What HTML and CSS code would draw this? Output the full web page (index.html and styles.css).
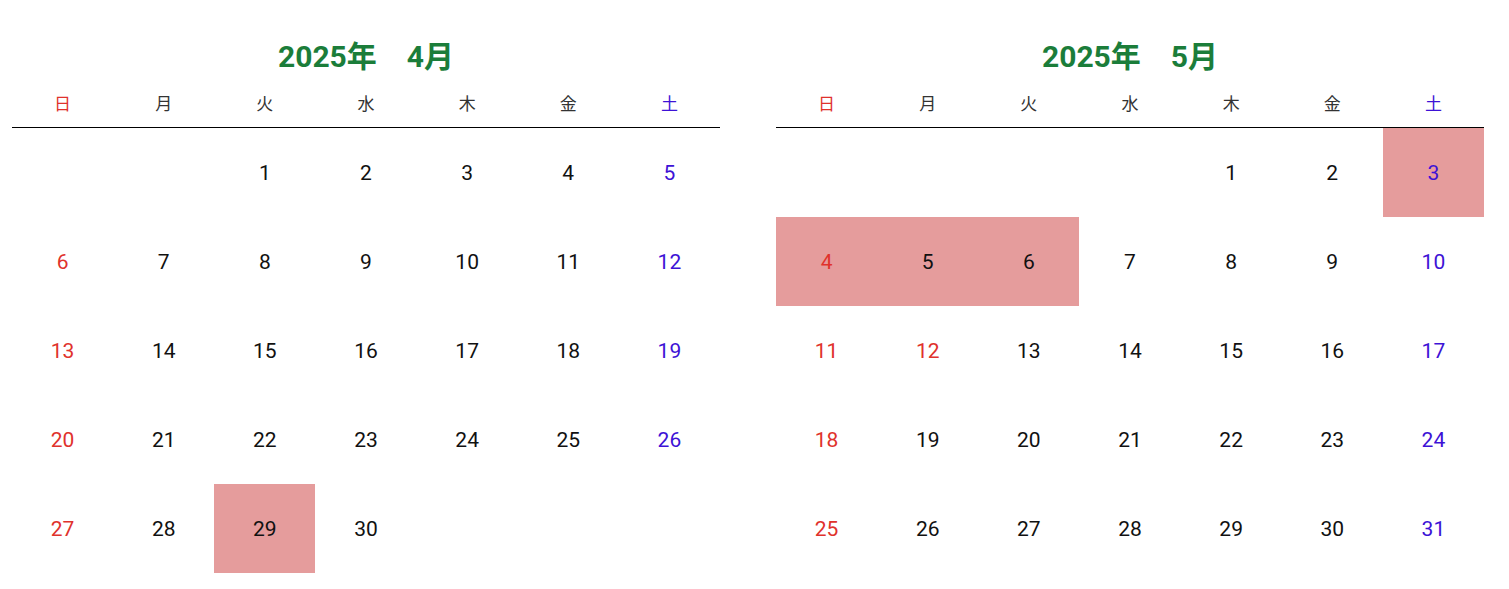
FILE: index.html
```html
<!DOCTYPE html>
<html lang="ja">
<head>
<meta charset="utf-8">
<link rel="stylesheet" href="styles.css">
</head>
<body>
<div class="page">
  <section class="cal">
    <h2 class="title">2025年　4月</h2>
    <div class="week">
      <div class="sun">日</div><div>月</div><div>火</div><div>水</div><div>木</div><div>金</div><div class="sat">土</div>
    </div>
    <div class="days">
      <div></div><div></div><div>1</div><div>2</div><div>3</div><div>4</div><div class="sat">5</div>
      <div class="sun">6</div><div>7</div><div>8</div><div>9</div><div>10</div><div>11</div><div class="sat">12</div>
      <div class="sun">13</div><div>14</div><div>15</div><div>16</div><div>17</div><div>18</div><div class="sat">19</div>
      <div class="sun">20</div><div>21</div><div>22</div><div>23</div><div>24</div><div>25</div><div class="sat">26</div>
      <div class="sun">27</div><div>28</div><div class="hl">29</div><div>30</div><div></div><div></div><div></div>
    </div>
  </section>
  <section class="cal">
    <h2 class="title">2025年　5月</h2>
    <div class="week">
      <div class="sun">日</div><div>月</div><div>火</div><div>水</div><div>木</div><div>金</div><div class="sat">土</div>
    </div>
    <div class="days">
      <div></div><div></div><div></div><div></div><div>1</div><div>2</div><div class="sat hl">3</div>
      <div class="sun hl">4</div><div class="hl">5</div><div class="hl">6</div><div>7</div><div>8</div><div>9</div><div class="sat">10</div>
      <div class="sun">11</div><div class="sun">12</div><div>13</div><div>14</div><div>15</div><div>16</div><div class="sat">17</div>
      <div class="sun">18</div><div>19</div><div>20</div><div>21</div><div>22</div><div>23</div><div class="sat">24</div>
      <div class="sun">25</div><div>26</div><div>27</div><div>28</div><div>29</div><div>30</div><div class="sat">31</div>
    </div>
  </section>
</div>
</body>
</html>
```
FILE: styles.css
```css
html, body {
  margin: 0;
  padding: 0;
  background: #fff;
}
body {
  font-family: Roboto, "Noto Sans CJK JP", sans-serif;
  color: #1a1a1a;
}
.page {
  display: flex;
  gap: 56px;
  padding: 40px 0 0 12px;
}
.cal {
  width: 708px;
}
.title {
  margin: 0;
  text-align: center;
  font-size: 30px;
  line-height: 34px;
  font-weight: 700;
  color: #1b7d3a;
}
.week {
  margin-top: 18px;
  display: grid;
  grid-template-columns: repeat(7, 1fr);
  text-align: center;
  font-size: 17px;
  line-height: 24px;
  padding-bottom: 11px;
  border-bottom: 1px solid #000;
  color: #333;
}
.days {
  display: grid;
  grid-template-columns: repeat(7, 1fr);
  grid-auto-rows: 89px;
}
.days > div {
  display: flex;
  align-items: center;
  justify-content: center;
  font-size: 21px;
  color: #111;
}
.sun, .days > .sun { color: #e0322c; }
.sat, .days > .sat { color: #3d12d6; }
.days > .hl { background: #e59c9c; }
```
